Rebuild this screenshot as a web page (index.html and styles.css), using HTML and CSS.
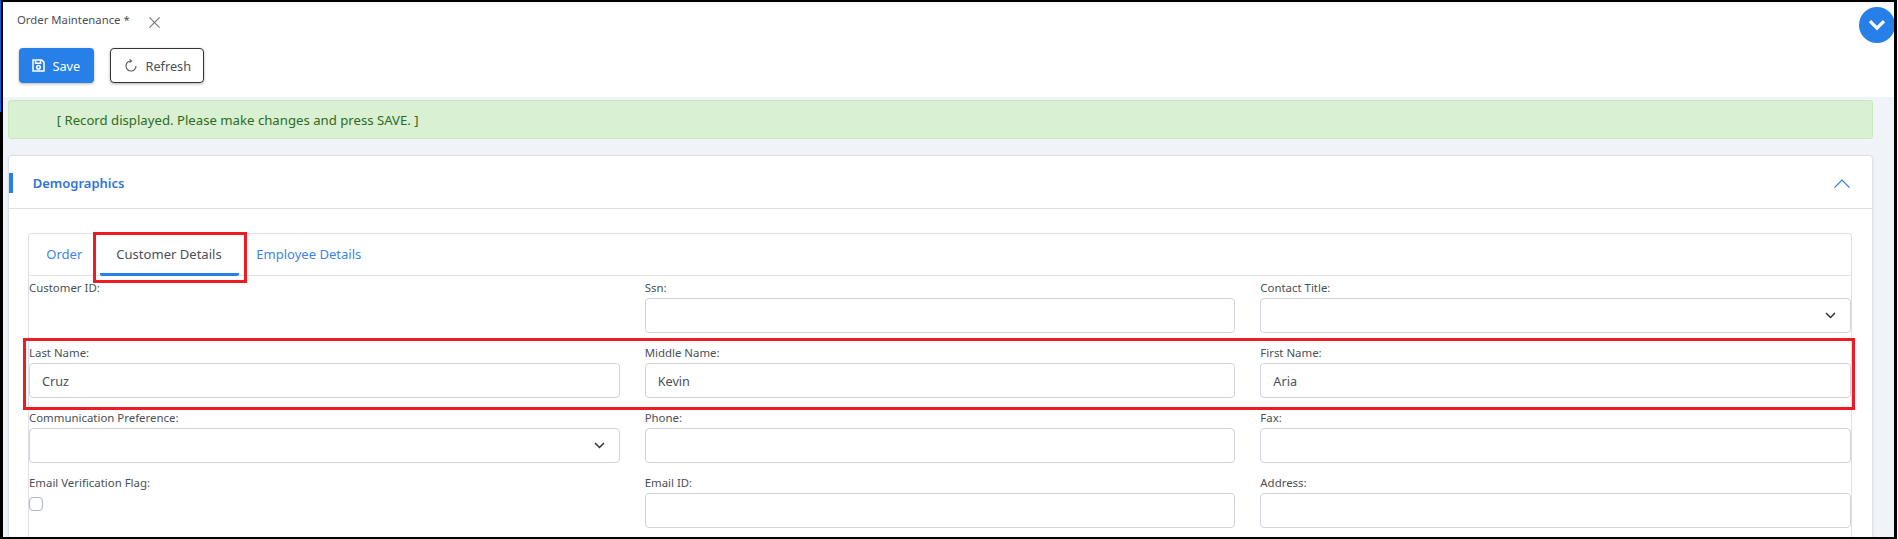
FILE: index.html
```html
<!DOCTYPE html>
<html lang="en">
<head>
<meta charset="utf-8">
<title>Order Maintenance</title>
<link rel="stylesheet" href="styles.css">
</head>
<body>
<div class="frame">
  <span class="edge-blue"></span>
  <header class="topbar">
    <div class="doc-tab">
      <span class="doc-title">Order Maintenance *</span>
      <svg class="doc-close" width="11" height="11" viewBox="0 0 11 11"><path d="M.4.4l10.200 10.200M10.600.4L.4 10.600" stroke="#777" stroke-width="1.1" fill="none"/></svg>
    </div>
    <div class="actions">
      <button class="btn btn-save">
        <svg width="13" height="13" viewBox="0 0 13 13" fill="none" stroke="#fff" stroke-width="1.5"><path d="M1 1h8.800L12 3.200V12H1z"/><path d="M3.600 1.200v3h5v-3"/><circle cx="6.500" cy="8.200" r="1.800"/></svg>
        <span>Save</span>
      </button>
      <button class="btn btn-refresh">
        <svg width="12" height="13" viewBox="0 0 12 13" fill="none" stroke="#555" stroke-width="1.1"><path d="M6 2A5 5 0 1 0 11 7"/><path d="M4.600.5L6.500 2 4.600 3.500"/></svg>
        <span>Refresh</span>
      </button>
    </div>
    <span class="collapse-fab">
      <svg width="18" height="12" viewBox="0 0 18 12" fill="none" stroke="#fff" stroke-width="3.200"><path d="M2 2.200l7 7 7-7"/></svg>
    </span>
  </header>
  <main class="content">
    <div class="alert">[ Record displayed. Please make changes and press SAVE. ]</div>
    <section class="card">
      <div class="card-head">
        <span class="card-marker"></span>
        <span class="card-title">Demographics</span>
        <svg class="card-chevron" width="16" height="9" viewBox="0 0 16 9" fill="none" stroke="#2b7de0" stroke-width="1.200"><path d="M.5 8.600L8 1l7.500 7.600"/></svg>
      </div>
      <div class="card-body">
        <div class="tabbox">
          <nav class="tabs">
            <a class="tab">Order</a>
            <a class="tab tab-active">Customer Details</a>
            <a class="tab">Employee Details</a>
          </nav>
          <div class="fields">
            <div class="field"><label class="label">Customer ID:</label></div>
            <div class="field"><label class="label">Ssn:</label><input class="control"></div>
            <div class="field"><label class="label">Contact Title:</label>
              <div class="select"><select class="control"><option></option></select><svg class="select-arrow" width="11" height="7" viewBox="0 0 11 7" fill="none" stroke="#333" stroke-width="1.500"><path d="M1 1l4.500 4.500L10 1"/></svg></div></div>
            <div class="field"><label class="label">Last Name:</label><input class="control" value="Cruz"></div>
            <div class="field"><label class="label">Middle Name:</label><input class="control" value="Kevin"></div>
            <div class="field"><label class="label">First Name:</label><input class="control" value="Aria"></div>
            <div class="field"><label class="label">Communication Preference:</label>
              <div class="select"><select class="control"><option></option></select><svg class="select-arrow" width="11" height="7" viewBox="0 0 11 7" fill="none" stroke="#333" stroke-width="1.500"><path d="M1 1l4.500 4.500L10 1"/></svg></div></div>
            <div class="field"><label class="label">Phone:</label><input class="control"></div>
            <div class="field"><label class="label">Fax:</label><input class="control"></div>
            <div class="field"><label class="label">Email Verification Flag:</label><span class="check"></span></div>
            <div class="field"><label class="label">Email ID:</label><input class="control"></div>
            <div class="field"><label class="label">Address:</label><input class="control"></div>
          </div>
        </div>
      </div>
    </section>
  </main>
  <span class="mark mark-tab"></span>
  <span class="mark mark-row"></span>
</div>
</body>
</html>
```
FILE: styles.css
```css
* { box-sizing: border-box; }
html, body { margin: 0; padding: 0; background: #fff; }
body { font-family: "Noto Sans", "Open Sans", sans-serif; color: #495057; height: 539px; overflow: hidden; }
.frame {
  position: relative;
  width: 1897px;
  height: 539px;
  border: solid #000;
  border-width: 2px 3px;
  display: flex;
  flex-direction: column;
  background: #f0f3f7;
}
.edge-blue { position: absolute; left: -3px; top: -2px; width: 1px; height: 112px; background: #0b5cd5; }
.topbar {
  position: relative;
  height: 95px;
  flex: none;
  background: #fff;
  overflow: hidden;
  box-shadow: inset 0 4px 4px -3px rgba(0,0,0,.06);
}
.doc-tab { height: 46px; padding: 8px 0 0 14px; display: flex; align-items: flex-start; }
.doc-title { font-size: 11.33px; line-height: 20px; color: #495057; }
.doc-close { margin: 7px 0 0 19px; }
.actions { display: flex; gap: 16px; padding-left: 16px; }
.btn {
  height: 35px;
  display: flex;
  align-items: center;
  border-radius: 4px;
  font: 12.7px "Noto Sans", sans-serif;
  box-shadow: 0 1px 3px rgba(0,0,0,.3);
  padding: 0;
}
.btn-save { width: 75px; background: #2680e8; border: 0; color: #fff; gap: 7.5px; padding-left: 13px; }
.btn-refresh { width: 94px; background: #fff; border: 1px solid #333; color: #495057; gap: 8.5px; padding-left: 14px; }
.collapse-fab {
  position: absolute;
  right: -1px;
  top: 5px;
  width: 36px;
  height: 36px;
  border-radius: 50%;
  background: #2680e8;
  display: flex;
  align-items: center;
  justify-content: center;
}
.content { flex: 1; padding: 3px 21.5px 0 4.5px; min-height: 0; }
.alert {
  height: 39px;
  margin-bottom: 16px;
  padding-left: 48.2px;
  background: #d9f0d2;
  border: 1px solid #c6e8bf;
  border-radius: 3px;
  color: #2f6b1e;
  font-size: 13.18px;
  line-height: 38px;
}
.card {
  background: #fff;
  border: 1px solid #dee2e6;
  border-bottom: 0;
  border-radius: 4px 4px 0 0;
  box-shadow: 0 1px 4px rgba(0,0,0,.05);
  height: 382px;
  overflow: hidden;
}
.card-head {
  height: 53px;
  position: relative;
  display: flex;
  align-items: center;
  justify-content: space-between;
  padding: 2px 21.5px 0 24.200px;
  border-bottom: 1px solid #dee2e6;
}
.card-marker { position: absolute; left: 0; top: 17px; width: 4px; height: 20px; background: #2680e8; }
.card-title { font-size: 13px; font-weight: 600; color: #2f75d6; }
.card-body { padding: 24px 19.5px 0; }
.tabbox { border: 1px solid #dee2e6; border-bottom: 0; border-radius: 4px 4px 0 0; height: 320px; }
.tabs { height: 42px; display: flex; border-bottom: 1px solid #dee2e6; padding-left: 5.2px; }
.tab { padding: 0 12px; height: 42px; line-height: 40px; font-size: 13.05px; color: #3d85e8; margin-right: 5.5px; }
.tab-active { color: #495057; padding: 0 17px 0 16.5px; border-bottom: 3px solid #2680e8; border-radius: 2px; }
.fields {
  display: grid;
  grid-template-columns: repeat(3, 1fr);
  column-gap: 25px;
  row-gap: 10px;
  padding-top: 2px;
}
.field { height: 55px; }
.label { display: block; height: 20px; font-size: 11.42px; line-height: 20px; color: #495057; }
.control {
  display: block;
  width: 100%;
  height: 35px;
  padding: 0 12px;
  background: #fff;
  border: 1px solid #ced4da;
  border-radius: 4px;
  font: 12.66px "Noto Sans", sans-serif;
  color: #495057;
  outline: 0;
  appearance: none;
}
.select { position: relative; }
.select-arrow { position: absolute; right: 15px; top: 14px; }
.check { display: block; width: 14px; height: 14px; margin-top: 4px; border: 1px solid #adb5bd; border-radius: 4px; background: #fff; }
.mark { position: absolute; border: 3px solid #ed1c24; pointer-events: none; }
.mark-tab { left: 90px; top: 230px; width: 154px; height: 51px; }
.mark-row { left: 20px; top: 336px; width: 1832px; height: 72px; }
```
